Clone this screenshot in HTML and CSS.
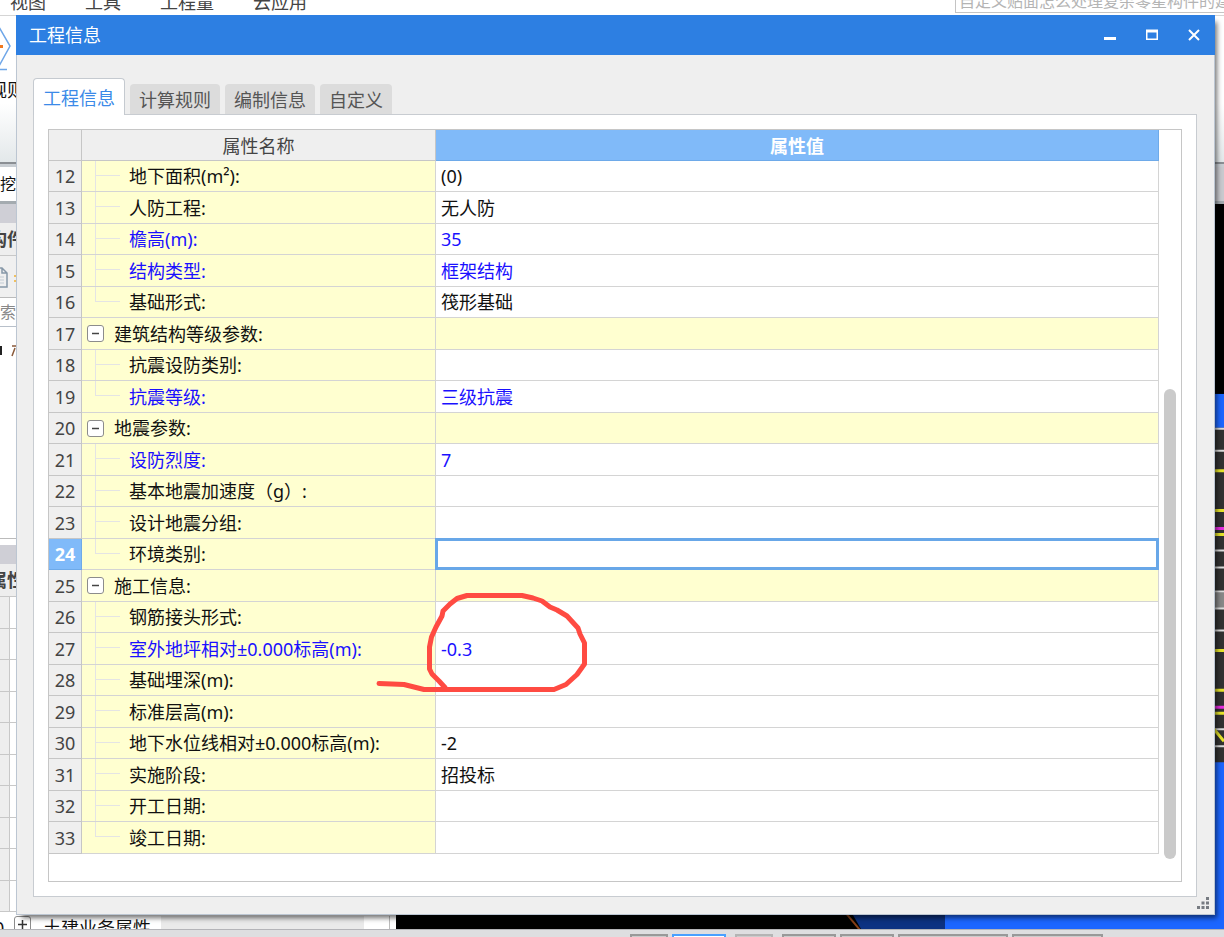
FILE: index.html
```html
<!DOCTYPE html>
<html lang="zh-CN">
<head>
<meta charset="utf-8">
<title>工程信息</title>
<link rel="stylesheet" href="styles.css">
</head>
<body>
<div class="app">
  <header class="menubar">
    <nav class="menu"><a href="#">视图</a><a href="#">工具</a><a href="#">工程量</a><a href="#">云应用</a></nav>
    <input class="help-search" type="text" aria-label="搜索帮助" value="自定义贴面怎么处理复杂零星构件的建模">
  </header>
  <div class="ribbon">
    <svg class="rule-icon" width="16" height="50" viewBox="0 0 16 50"><path d="M-1 3L10 22L-1 42M0 45.500h7" fill="none" stroke="#6ea6e8" stroke-width="1.500"/><path d="M0 22.500h3" stroke="#f07820" stroke-width="3"/></svg>
    <span class="rule-text">规则</span>
  </div>
  <div class="toolstrip"><span>挖</span></div>
  <div class="work">
    <aside class="side">
      <div class="band"></div>
      <div class="side-title">构件</div>
      <div class="side-tools"><svg width="16" height="22" viewBox="0 0 16 22"><path d="M-5 1h7l5 5v14H-5M2 1v5h5" fill="none" stroke="#8798a8" stroke-width="1.500"/><path d="M0 10h4M0 13h4M0 16h4" stroke="#c3ccd4"/><path d="M14 9h2M14 14h2" stroke="#f0c060" stroke-width="2"/></svg></div>
      <div class="side-search">索</div>
      <div class="side-tree"><svg width="16" height="14" viewBox="0 0 16 14"><path d="M0 3h1v7H0" fill="none" stroke="#222" stroke-width="2"/><path d="M12 2h4M15 4l-3 8" fill="none" stroke="#8a5a3a" stroke-width="1.500"/></svg></div>
      <div class="band"></div>
      <div class="side-title">属性</div>
      <div class="side-grid">
        <i></i><i></i><i></i><i></i><i></i><i></i><i></i><i></i><i></i><i></i>
      </div>
      <div class="side-last">
        <span class="num">0</span>
        <button class="toggle" type="button" aria-label="展开"><svg width="9" height="9" viewBox="0 0 9 9"><path d="M0 4.500h9M4.500 0v9" stroke="#333" stroke-width="1.500"/></svg></button>
        <span class="last-name">土建业务属性</span>
        <span class="last-value"></span>
      </div>
    </aside>
    <svg class="canvas" viewBox="0 0 828 726" preserveAspectRatio="none">
      <rect width="828" height="726" fill="#000"/>
      <rect x="549" y="190" width="279" height="536" fill="#1c66ff"/>
      <path d="M450 700h99v26h-84z" fill="#0d3282"/>
      <path d="M449 709l15 18" stroke="#884018" stroke-width="2"/>
      <path d="M800 0h28v190h-28z" fill="#000"/>
      <path d="M800 224h28v335h-28z" fill="#323232"/>
      <path d="M800 389h28v16h-28z" fill="#888"/>
      <path d="M800 225h28M800 247h28M800 347h28M800 364h28M800 388h28M800 405h28M800 427h28M800 526h28M800 543h28" stroke="#ddd" stroke-width="2"/>
      <path d="M800 267h28M800 307h28M800 331h28M800 447h28M800 487h28M800 510h28M818 526l10 12" stroke="#e8e52c" stroke-width="3"/>
      <path d="M800 325h28M800 504h28" stroke="#e82ae0" stroke-width="3"/>
    </svg>
  </div>
  <footer class="status"><i class="w38"></i><i class="w54 on"></i><i class="w38 dim"></i><i class="w54"></i><i class="w54"></i><i class="w110"></i><i class="w91"></i></footer>
</div>

<section class="dialog" role="dialog" aria-label="工程信息">
  <header class="titlebar">
    <h1>工程信息</h1>
    <button type="button" aria-label="最小化"><svg width="12" height="12" viewBox="0 0 12 12"><path d="M0 9.500h12" stroke="#fff" stroke-width="3"/></svg></button>
    <button type="button" aria-label="最大化"><svg width="12" height="12" viewBox="0 0 12 12"><path d="M.75 2v8.250h10.500V2" fill="none" stroke="#fff" stroke-width="1.500"/><path d="M0 2h12" stroke="#fff" stroke-width="3"/></svg></button>
    <button type="button" aria-label="关闭"><svg width="12" height="12" viewBox="0 0 12 12"><path d="M1 1l10 10M11 1L1 11" stroke="#fff" stroke-width="2"/></svg></button>
  </header>
  <div class="tabs" role="tablist">
    <button type="button" role="tab" class="tab active" aria-selected="true">工程信息</button>
    <button type="button" role="tab" class="tab">计算规则</button>
    <button type="button" role="tab" class="tab">编制信息</button>
    <button type="button" role="tab" class="tab">自定义</button>
  </div>
  <div class="panel">
    <div class="frame">
      <table class="props">
        <colgroup><col class="c-num"><col class="c-name"><col></colgroup>
        <thead><tr><th></th><th>属性名称</th><th class="picked">属性值</th></tr></thead>
        <tbody>
          <tr><th>12</th><td class="leaf">地下面积(m²):</td><td>(0)</td></tr>
          <tr><th>13</th><td class="leaf">人防工程:</td><td>无人防</td></tr>
          <tr class="key"><th>14</th><td class="leaf">檐高(m):</td><td>35</td></tr>
          <tr class="key"><th>15</th><td class="leaf">结构类型:</td><td>框架结构</td></tr>
          <tr><th>16</th><td class="leaf end">基础形式:</td><td>筏形基础</td></tr>
          <tr class="group"><th>17</th><td><div class="group-name"><button class="toggle" type="button" aria-label="折叠"><svg width="9" height="9" viewBox="0 0 9 9"><path d="M1 4.500h7" stroke="#444" stroke-width="1.500"/></svg></button>建筑结构等级参数:</div></td><td></td></tr>
          <tr><th>18</th><td class="leaf">抗震设防类别:</td><td></td></tr>
          <tr class="key"><th>19</th><td class="leaf end">抗震等级:</td><td>三级抗震</td></tr>
          <tr class="group"><th>20</th><td><div class="group-name"><button class="toggle" type="button" aria-label="折叠"><svg width="9" height="9" viewBox="0 0 9 9"><path d="M1 4.500h7" stroke="#444" stroke-width="1.500"/></svg></button>地震参数:</div></td><td></td></tr>
          <tr class="key"><th>21</th><td class="leaf">设防烈度:</td><td>7</td></tr>
          <tr><th>22</th><td class="leaf">基本地震加速度（g）:</td><td></td></tr>
          <tr><th>23</th><td class="leaf">设计地震分组:</td><td></td></tr>
          <tr class="current"><th>24</th><td class="leaf end"><label for="env">环境类别:</label></td><td class="edit"><input id="env" type="text"></td></tr>
          <tr class="group"><th>25</th><td><div class="group-name"><button class="toggle" type="button" aria-label="折叠"><svg width="9" height="9" viewBox="0 0 9 9"><path d="M1 4.500h7" stroke="#444" stroke-width="1.500"/></svg></button>施工信息:</div></td><td></td></tr>
          <tr><th>26</th><td class="leaf">钢筋接头形式:</td><td></td></tr>
          <tr class="key"><th>27</th><td class="leaf">室外地坪相对±0.000标高(m):</td><td>-0.3</td></tr>
          <tr><th>28</th><td class="leaf">基础埋深(m):</td><td></td></tr>
          <tr><th>29</th><td class="leaf">标准层高(m):</td><td></td></tr>
          <tr><th>30</th><td class="leaf">地下水位线相对±0.000标高(m):</td><td>-2</td></tr>
          <tr><th>31</th><td class="leaf">实施阶段:</td><td>招投标</td></tr>
          <tr><th>32</th><td class="leaf">开工日期:</td><td></td></tr>
          <tr><th>33</th><td class="leaf end">竣工日期:</td><td></td></tr>
        </tbody>
      </table>
      <div class="scroll"><div class="thumb"></div></div>
    </div>
  </div>
  <svg class="grip" width="12" height="12" viewBox="0 0 12 12"><path d="M9 0h3v3H9zM4.500 4.500h3v3h-3zM9 4.500h3v3H9zM0 9h3v3H0zM4.500 9h3v3h-3zM9 9h3v3H9z" fill="#777b82"/></svg>
  <svg class="markup" width="216" height="104" viewBox="375 590 216 104"><path d="M379 683.500L392 684L404 684.500L414 687L424 689.500H554L566 684.500L577 674.500L584.500 664V643L580 634L578 628L567 616L557 610L550 607L542 601L533 598L522 595.500H467L457 598.500L450 604L443 611L442 616L436 627L431.500 637L429.500 647V669L432 674L439 681L445 687.500" fill="none" stroke="#ff4b42" stroke-width="5" stroke-linecap="round" stroke-linejoin="round"/></svg>
</section>
</body>
</html>
```
FILE: styles.css
```css
* { box-sizing: border-box; }

body {
  margin: 0;
  height: 100vh;
  position: relative;
  overflow: hidden;
  background: #fff;
  color: #111;
  font: 18px/24px "Noto Sans", "Noto Sans CJK SC", sans-serif;
}

button, input { font: inherit; color: inherit; border: 0; padding: 0; margin: 0; background: none; }

/* main window */
.app { height: 100%; display: flex; flex-direction: column; }

.menubar {
  flex: none;
  height: 16px;
  display: flex;
  align-items: flex-end;
  justify-content: space-between;
  border-bottom: 1px solid #d5d5d5;
  overflow: hidden;
}
.menu { display: flex; gap: 39px; padding: 0 0 1px 10px; }
.menu a { color: #444; text-decoration: none; }
.help-search {
  width: 269px;
  height: 26px;
  margin-bottom: 2px;
  padding-left: 3px;
  border: 1px solid #c4c4c4;
  border-right: 0;
  color: #b4b4b4;
  font-size: 16px;
}

.ribbon {
  flex: none;
  height: 148px;
  padding-top: 8px;
  overflow: hidden;
  background: linear-gradient(#fff 60%, #e3e8ea);
  border-bottom: 2px solid #8b8f94;
}
.rule-icon { display: block; }
.rule-text { display: block; margin: 4px 0 0 -11px; }

.toolstrip {
  flex: none;
  height: 40px;
  border-top: 3px solid #c9ced3;
  border-bottom: 3px solid #a4abb0;
  display: flex;
  align-items: center;
  background: linear-gradient(90deg, #fff 50%, #c9cacf 50%);
}
.toolstrip span { font-size: 16px; }

.work { flex: 1; min-height: 0; display: flex; }
.side { flex: none; width: 396px; display: flex; flex-direction: column; overflow: hidden; }
.band { flex: none; height: 19px; background: #cfcfd6; }
.side-title {
  flex: none;
  height: 33px;
  padding-top: 4px;
  text-indent: -11px;
  background: #eee;
  border-bottom: 1px solid #c8c8c8;
  font-weight: 700;
  color: #444;
}
.side-tools { flex: none; height: 42px; padding-top: 11px; background: #f0f0f0; border-bottom: 1px solid #bbb; }
.side-tools svg, .side-tree svg { display: block; }
.side-search { flex: none; height: 29px; padding-top: 2px; color: #888; font-size: 16px; border-bottom: 1px solid #b8c0ca; }
.side-tree { flex: 1; min-height: 0; margin-bottom: 6px; padding-top: 17px; border-bottom: 1px solid #bbb; }
.side-grid { flex: none; background: linear-gradient(90deg, #eee 9px, #c8c8c8 9px, #c8c8c8 10px, #fff 10px); }
.side-grid i { display: block; height: 32px; border-bottom: 1px solid #c8c8c8; }
.side-grid i:nth-child(even) { height: 31px; }
.side-last { flex: none; height: 17px; padding-top: 4px; display: flex; align-items: flex-start; overflow: hidden; }
.side-last .num { flex: none; width: 14px; text-indent: -6px; }
.last-name { flex: none; width: 130px; padding-left: 12px; white-space: nowrap; }
.side-last .last-value { flex: 1; height: 17px; margin-right: 6px; border-right: 1px solid #bbb; background: linear-gradient(90deg, #eaeaea 203px, #fff 203px); }
.canvas { flex: 1; min-width: 0; width: 100%; height: 100%; display: block; }

.status {
  flex: none;
  height: 8px;
  padding: 4px 0 0 630px;
  display: flex;
  gap: 4px;
  background: #dedee0;
  border-top: 1px solid #b4b4b8;
}
.status i { flex: none; height: 6px; border: 2px solid #999; background: #ccc; }
.status .on { border-color: #49a0ff; background: #fff; margin-right: 5px; }
.status .dim { border-color: #b4b4b4; margin-right: 5px; }
.w38 { width: 38px; }
.w54 { width: 54px; }
.w91 { width: 91px; }
.w110 { width: 110px; }

/* dialog */
.dialog {
  position: absolute;
  inset: 15px 9px 22px 16px;
  display: flex;
  flex-direction: column;
  background: #efefef;
  border: 1px solid #bcc6d2;
  border-top: 0;
  box-shadow: 4px 5px 5px -2px rgba(0, 0, 0, .55);
}
.titlebar {
  flex: none;
  height: 40px;
  margin: 0 -1px;
  padding: 0 15px 0 13px;
  display: flex;
  align-items: center;
  gap: 30px;
  background: #2d7fe2;
  color: #fff;
}
.titlebar h1 { flex: 1; margin: 0; font-size: 18px; font-weight: 400; }
.titlebar button { width: 12px; height: 12px; display: flex; }

.tabs { position: relative; z-index: 1; flex: none; display: flex; align-items: flex-end; gap: 5px; margin: 23px 17px -1px 16px; }
.tab {
  height: 30px;
  margin-bottom: 1px;
  padding: 1px 9px 0;
  border-radius: 4px 4px 0 0;
  background: #dcdcdc;
  color: #555;
}
.tab.active {
  height: 37px;
  margin-bottom: 0;
  padding-top: 2px;
  border: 1px solid #c5cad0;
  border-bottom: 0;
  background: #fff;
  color: #3b8ae8;
}

.panel {
  flex: 1;
  min-height: 0;
  display: flex;
  margin: 0 17px 17px 16px;
  padding: 14px;
  border: 1px solid #c8ccd1;
  background: #fff;
}
.frame { flex: 1; display: flex; align-items: flex-start; border: 1px solid #c6c6c6; }

.props { flex: 1; width: 0; table-layout: fixed; border-collapse: separate; border-spacing: 0; }
.c-num { width: 33px; }
.c-name { width: 354px; }
.props th, .props td {
  height: 32px;
  padding: 0 0 0 5px;
  border: solid #d4d4d4;
  border-width: 0 1px 1px 0;
  line-height: 24px;
  text-align: left;
  font-weight: 400;
  white-space: nowrap;
}
.props thead th, .props tr:nth-child(odd) > * { height: 31px; }
.props th { padding: 0; border-color: #c6c6c6; background: #efefef; color: #444; text-align: center; }
.props thead th { padding-top: 1px; }
.props th.picked { background: #80baf9; border-color: #6eaae9; color: #fff; font-weight: 700; }
.props .leaf {
  padding-left: 47px;
  background:
    linear-gradient(#e4e4e4, #e4e4e4) 13px 0 / 1px 100% no-repeat,
    linear-gradient(#e4e4e4, #e4e4e4) 13px 14px / 25px 1px no-repeat,
    #ffffd0;
}
.props .leaf.end {
  background:
    linear-gradient(#e4e4e4, #e4e4e4) 13px 0 / 1px 14px no-repeat,
    linear-gradient(#e4e4e4, #e4e4e4) 13px 14px / 25px 1px no-repeat,
    #ffffd0;
}
.props .group td { background: #ffffd0; }
.group-name { display: flex; align-items: center; gap: 10px; }
.toggle {
  flex: none;
  width: 17px;
  height: 17px;
  display: flex;
  align-items: center;
  justify-content: center;
  border: 1px solid #8c8c8c;
  border-radius: 3px;
  background: #fff;
}
.key td { color: #1a10ff; }
.props .current th { background: #80baf9; border-color: #6eaae9; color: #fff; font-weight: 700; }
.props .edit { padding: 0; }
.edit input { display: block; width: 100%; height: 30px; padding: 0 4px; outline: 3px solid #68a7e8; outline-offset: -2px; background: #fff; }

.scroll { flex: none; align-self: stretch; width: 22px; padding: 259px 5px 22px; }
.thumb { height: 100%; border-radius: 6px; background: #cacaca; }

.grip { position: absolute; right: 5px; bottom: 5px; }
.markup { position: absolute; left: 358px; top: 575px; pointer-events: none; }
```
